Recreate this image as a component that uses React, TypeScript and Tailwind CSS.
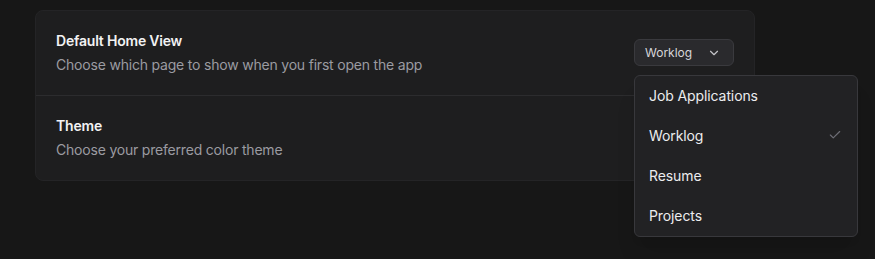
import { ChevronDown, Check } from 'lucide-react';

const options = ['Job Applications', 'Worklog', 'Resume', 'Projects'];

function SettingRow({
  title,
  description,
  children,
  bordered,
}: {
  title: string;
  description: string;
  children?: React.ReactNode;
  bordered?: boolean;
}) {
  return (
    <div
      className={
        'flex items-center justify-between px-5 pt-5 pb-5 ' +
        (bordered ? 'border-t border-[#2c2c2e]' : '')
      }
    >
      <div className="flex flex-col gap-1">
        <p className="text-[14px] leading-5 font-semibold tracking-[-0.2px] text-[#f2f2f3]">{title}</p>
        <p className="text-[14px] leading-5 tracking-[-0.2px] text-[#9b9ba1]">{description}</p>
      </div>
      {children}
    </div>
  );
}

export default function App() {
  const selected = 'Worklog';

  return (
    <div
      className="w-[875px] h-[259px] bg-[#171717] pt-[10px] pl-[35px] overflow-hidden"
      style={{ fontFamily: 'Inter, "Noto Sans", sans-serif' }}
    >
      <div className="w-[720px] rounded-lg border border-[#242426] bg-[#1e1e1f]">
        <SettingRow
          title="Default Home View"
          description="Choose which page to show when you first open the app"
        >
          {/* Select trigger + open menu */}
          <div className="relative mb-[1px]">
            <button className="flex items-center justify-between w-[100px] h-[27px] pl-[10px] pr-[12px] rounded-md border border-[#3a3a3e] bg-[#2a2a2d] text-[12px] text-[#d6d6da]">
              <span>{selected}</span>
              <ChevronDown className="w-[14px] h-[14px] text-[#c4c4c8]" strokeWidth={2} />
            </button>

            <div className="absolute left-0 top-[36px] z-10 w-[224px] rounded-md border border-[#38383c] bg-[#222224] shadow-xl">
              {options.map((opt) => (
                <div
                  key={opt}
                  className="flex items-center justify-between h-10 pb-[2px] pl-[14px] pr-[15px] text-[14px] tracking-[-0.1px] text-[#ececee]"
                >
                  <span>{opt}</span>
                  {opt === selected && (
                    <Check className="w-[14px] h-[14px] text-[#6e6e76]" strokeWidth={2} />
                  )}
                </div>
              ))}
            </div>
          </div>
        </SettingRow>

        <SettingRow
          title="Theme"
          description="Choose your preferred color theme"
          bordered
        />
      </div>
    </div>
  );
}
